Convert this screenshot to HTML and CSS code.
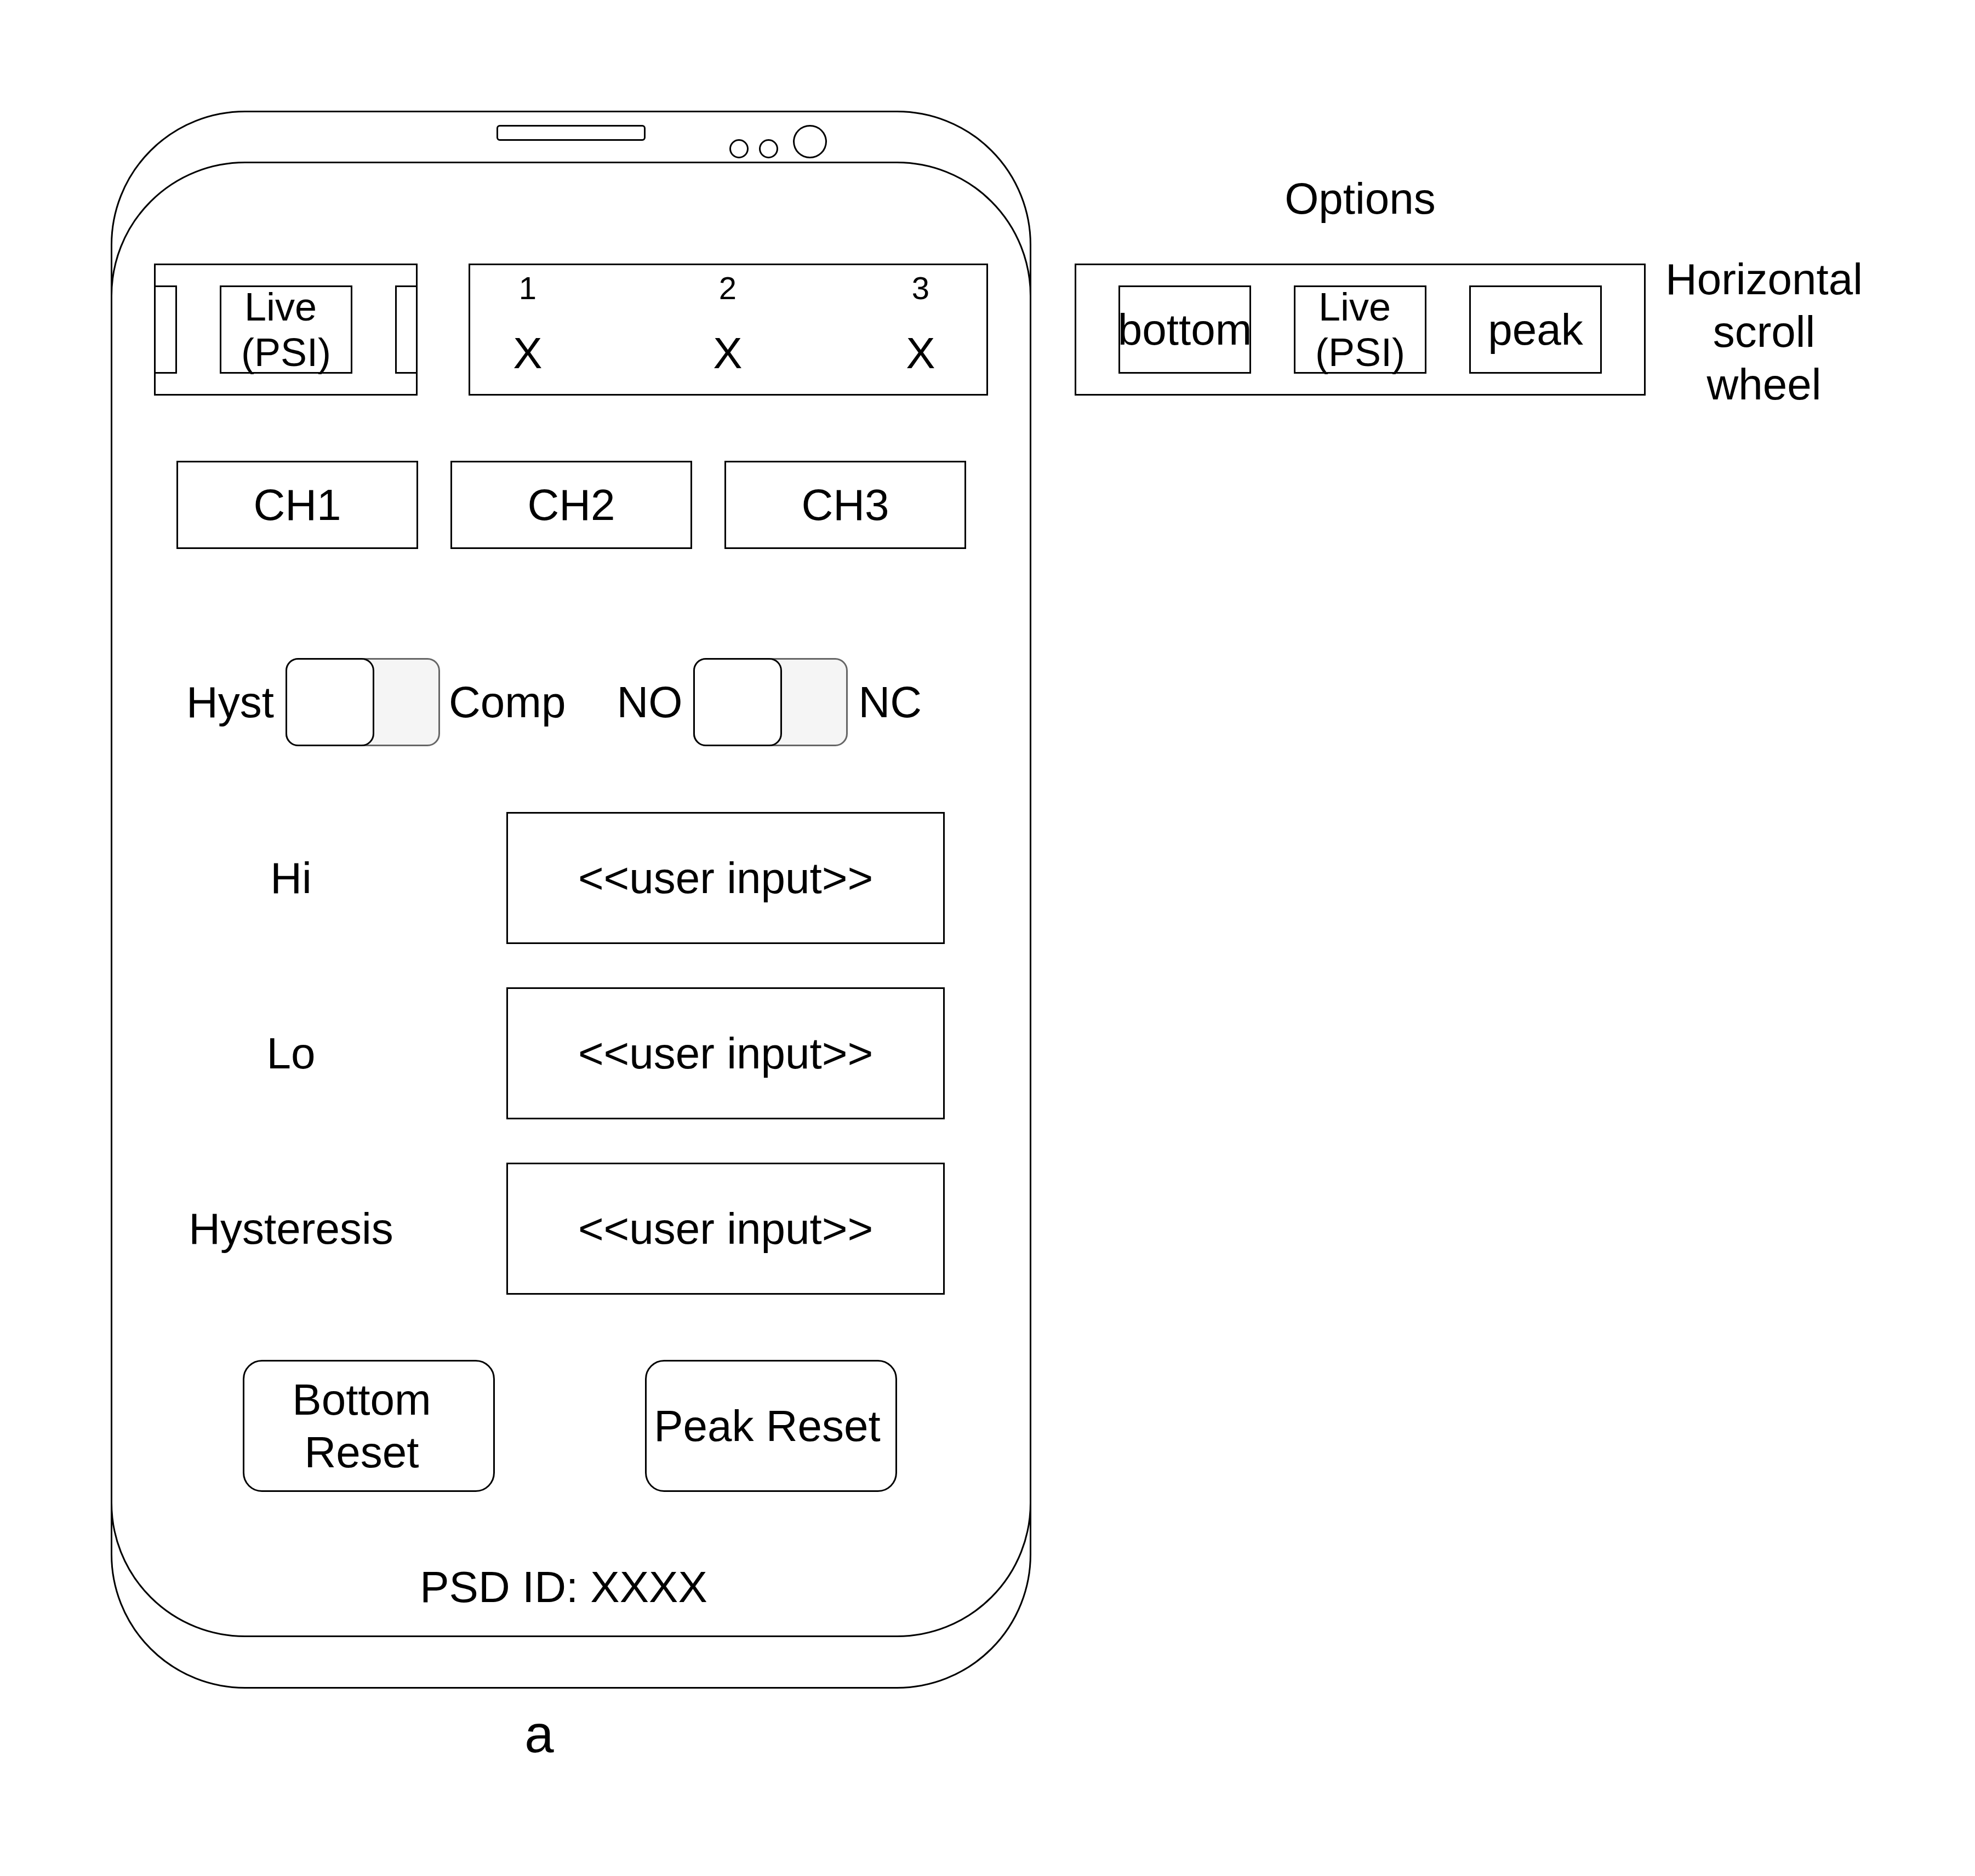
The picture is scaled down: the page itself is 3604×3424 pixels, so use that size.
FILE: index.html
```html
<!DOCTYPE html>
<html lang="en">
<head>
<meta charset="utf-8">
<title>PSD settings wireframe</title>
<link rel="stylesheet" href="styles.css">
</head>
<body>
<div class="canvas">
  <div class="device-col">
    <div class="phone">
      <div class="topbar">
        <div class="speaker"></div>
        <div class="cams">
          <span class="cam cam-sm"></span>
          <span class="cam cam-sm"></span>
          <span class="cam cam-lg"></span>
        </div>
      </div>
      <div class="screen">
        <div class="row row-top">
          <div class="live-box">
            <div class="tab tab-left"></div>
            <div class="box live-inner"><span>Live&nbsp;<br>(PSI)</span></div>
            <div class="tab tab-right"></div>
          </div>
          <div class="chan-box">
            <div class="chan c1"><span class="num">1</span><span class="x">X</span></div>
            <div class="chan c2"><span class="num">2</span><span class="x">X</span></div>
            <div class="chan c3"><span class="num">3</span><span class="x">X</span></div>
          </div>
        </div>

        <div class="row row-ch">
          <div class="box ch">CH1</div>
          <div class="box ch">CH2</div>
          <div class="box ch">CH3</div>
        </div>

        <div class="row row-toggle">
          <span class="lbl">Hyst</span>
          <div class="toggle t1"><div class="knob"></div></div>
          <span class="lbl comp">Comp</span>
          <span class="lbl no">NO</span>
          <div class="toggle t2"><div class="knob"></div></div>
          <span class="lbl nc">NC</span>
        </div>

        <div class="fields">
          <div class="field-label">Hi</div>
          <div class="box input">&lt;&lt;user input&gt;&gt;</div>
          <div class="field-label">Lo</div>
          <div class="box input">&lt;&lt;user input&gt;&gt;</div>
          <div class="field-label">Hysteresis</div>
          <div class="box input">&lt;&lt;user input&gt;&gt;</div>
        </div>

        <div class="row row-btn">
          <div class="box btn btn-bottom">Bottom Reset</div>
          <div class="box btn btn-peak">Peak Reset</div>
        </div>

        <div class="psd">PSD ID: XXXX</div>
      </div>
    </div>
    <div class="caption">a</div>
  </div>

  <div class="options-col">
    <div class="options-title">Options</div>
    <div class="options-row">
      <div class="options-box">
        <div class="box opt">bottom</div>
        <div class="box opt opt-live"><span>Live&nbsp;<br>(PSI)</span></div>
        <div class="box opt">peak</div>
      </div>
      <div class="scroll-note">Horizontal scroll wheel</div>
    </div>
  </div>
</div>
</body>
</html>
```

FILE: styles.css
```css
* {
  box-sizing: border-box;
}

html,
body {
  margin: 0;
  padding: 0;
  background: #ffffff;
}

body {
  font-family: "Liberation Sans", Arial, Helvetica, sans-serif;
  color: #000000;
  font-size: 80px;
  line-height: 96px;
}

.canvas {
  width: 3604px;
  height: 3424px;
  display: flex;
  align-items: flex-start;
  padding: 202px 0 0 202px;
  overflow: hidden;
}

/* ---------- phone ---------- */
.device-col {
  flex: none;
  width: 1680px;
  display: flex;
  flex-direction: column;
}

.phone {
  width: 1680px;
  height: 2880px;
  border: 3px solid #000;
  border-radius: 245px;
  display: flex;
  flex-direction: column;
}

.topbar {
  flex: none;
  height: 90px;
  display: flex;
  align-items: flex-start;
  padding-left: 701px;
}

.speaker {
  width: 272px;
  height: 29px;
  margin-top: 23px;
  border: 3px solid #000;
  border-radius: 6px;
}

.cams {
  display: flex;
  align-items: flex-end;
  margin-left: 153px;
  margin-top: 23px;
}

.cam {
  display: block;
  border: 3px solid #000;
  border-radius: 50%;
}

.cam-sm {
  width: 35px;
  height: 35px;
}

.cam-sm + .cam-sm {
  margin-left: 19px;
}

.cam-lg {
  width: 62px;
  height: 61px;
  margin-left: 27px;
}

.screen {
  flex: none;
  margin: 0 -3px;
  height: 2693px;
  border: 3px solid #000;
  border-radius: 245px;
  display: flex;
  flex-direction: column;
}

.row {
  flex: none;
  display: flex;
  align-items: center;
}

.box {
  border: 3px solid #000;
  background: #fff;
  display: flex;
  align-items: center;
  justify-content: center;
  text-align: center;
}

/* row 1 */
.row-top {
  margin-top: 183px;
  padding-left: 76px;
}

.live-box {
  width: 481px;
  height: 241px;
  border: 3px solid #000;
  display: flex;
  align-items: center;
  justify-content: space-between;
}

.tab {
  height: 161px;
  border: 3px solid #000;
}

.tab-left {
  width: 42px;
  margin-left: -3px;
}

.tab-right {
  width: 41px;
  margin-right: -3px;
}

.live-inner,
.opt-live {
  width: 242px;
  height: 161px;
  font-size: 72px;
  line-height: 83px;
}

.chan-box {
  width: 948px;
  height: 241px;
  margin-left: 93px;
  border: 3px solid #000;
  display: flex;
  align-items: flex-start;
}

.chan {
  width: 120px;
  display: flex;
  flex-direction: column;
  align-items: center;
}

.chan .num {
  font-size: 58px;
  line-height: 67px;
  margin-top: 8px;
}

.chan .x {
  margin-top: 38px;
}

.c1 {
  margin-left: 45px;
}

.c2 {
  margin-left: 245px;
}

.c3 {
  margin-left: 232px;
}

/* row 2 */
.row-ch {
  margin-top: 119px;
  padding-left: 117px;
  gap: 59px;
}

.ch {
  width: 441px;
  height: 161px;
}

/* row 3 */
.row-toggle {
  margin-top: 199px;
  padding-left: 135px;
  height: 161px;
}

.toggle {
  flex: none;
  width: 282px;
  height: 161px;
  border: 3px solid #666666;
  background: #f5f5f5;
  border-radius: 23px;
  display: flex;
}

.knob {
  width: 162px;
  margin: -3px 0 -3px -3px;
  border: 3px solid #000;
  background: #fff;
  border-radius: 23px;
}

.t1 {
  margin-left: 21px;
}

.comp {
  margin-left: 16px;
}

.no {
  margin-left: 93px;
}

.t2 {
  margin-left: 20px;
}

.nc {
  margin-left: 19px;
}

/* fields */
.fields {
  flex: none;
  margin-top: 120px;
  display: grid;
  grid-template-columns: 652px 800px;
  column-gap: 67px;
  row-gap: 79px;
  align-items: center;
}

.field-label {
  text-align: center;
}

.input {
  height: 241px;
}

/* buttons */
.row-btn {
  margin-top: 119px;
  padding-left: 238px;
  gap: 274px;
}

.btn {
  width: 460px;
  height: 241px;
  border-radius: 35px;
}

.btn-bottom {
  padding-right: 26px;
}

.btn-peak {
  padding-right: 14px;
}

.psd {
  flex: none;
  margin-top: 126px;
  padding-right: 27px;
  text-align: center;
}

.caption {
  margin-top: 28px;
  margin-left: 682px;
  width: 200px;
  text-align: center;
  font-size: 96px;
  line-height: 110px;
}

/* ---------- options ---------- */
.options-col {
  flex: none;
  margin-left: 79px;
  padding-top: 113px;
  display: flex;
  flex-direction: column;
}

.options-title {
  width: 1042px;
  text-align: center;
}

.options-row {
  display: flex;
  align-items: flex-start;
  margin-top: 70px;
}

.options-box {
  flex: none;
  width: 1042px;
  height: 241px;
  border: 3px solid #000;
  display: flex;
  align-items: center;
  padding-left: 77px;
  gap: 78px;
}

.opt {
  flex: none;
  width: 242px;
  height: 161px;
}

.scroll-note {
  flex: none;
  width: 380px;
  margin-left: 26px;
  margin-top: -19px;
  text-align: center;
}
```
